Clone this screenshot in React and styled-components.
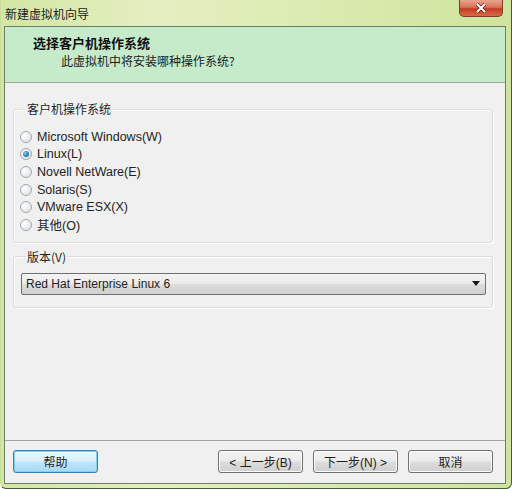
import React from "react";
import styled, { createGlobalStyle } from "styled-components";

const GlobalStyle = createGlobalStyle`
  html, body {
    margin: 0;
    padding: 0;
  }
  body {
    font-family: "Liberation Sans", "Noto Sans CJK SC", sans-serif;
    font-size: 12px;
    color: #1e1e1e;
  }
`;

const osList = [
  { label: "Microsoft Windows(W)" },
  { label: "Linux(L)", checked: true },
  { label: "Novell NetWare(E)" },
  { label: "Solaris(S)" },
  { label: "VMware ESX(X)" },
  { label: "其他(O)" }
];

const Window = styled.div`
  width: 512px;
  height: 489px;
  box-sizing: border-box;
  display: flex;
  flex-direction: column;
  background: linear-gradient(90deg, #d3e6a4 0%, #e4efc1 30%, #dcebb2 60%, #cfe49e 100%);
  border: 1px solid #4a5a42;
  border-top: none;
  border-left-color: #c7df9a;
  border-radius: 0 0 6px 6px;
`;

const TitleBar = styled.div`
  height: 26px;
  display: flex;
  align-items: flex-start;
  justify-content: space-between;
  padding-left: 4px;
  flex-shrink: 0;
`;

const Title = styled.span`
  font-family: "Noto Sans CJK SC", sans-serif;
  font-size: 12px;
  line-height: 27px;
  color: #1c1c1c;
`;

const CloseButton = styled.div`
  width: 44px;
  height: 17px;
  margin-right: 8px;
  box-sizing: border-box;
  border: 1px solid #7b3a2a;
  border-top: none;
  border-radius: 0 0 5px 5px;
  background: linear-gradient(180deg, #e8a58f 0%, #d9735a 45%, #c43d22 55%, #d66a4a 100%);
  display: flex;
  align-items: center;
  justify-content: center;
`;

const Panel = styled.div`
  flex: 1;
  margin: 0 5px 4px 3px;
  border: 1px solid #6e7d68;
  display: flex;
  flex-direction: column;
  background: #f0f0f0;
`;

const Header = styled.div`
  height: 56px;
  box-sizing: border-box;
  background: #c5ebcb;
  border-bottom: 1px solid #a0a8a0;
  padding: 7px 0 0 28px;
  font-family: "Noto Sans CJK SC", sans-serif;
`;

const HeaderTitle = styled.div`
  font-size: 13px;
  font-weight: bold;
  line-height: 18px;
  color: #111;
`;

const HeaderSub = styled.div`
  font-size: 12px;
  line-height: 18px;
  padding-left: 28px;
  color: #1c1c1c;
`;

const Body = styled.div`
  flex: 1;
  padding: 18px 12px 0 8px;
  display: flex;
  flex-direction: column;
  gap: 6px;
`;

const Group = styled.fieldset`
  margin: 0;
  padding: ${({ $pad }) => $pad};
  border: 1px solid #dcdcdc;
  border-radius: 3px;
  box-shadow: inset 1px 1px 0 #ffffff, 1px 1px 0 #ffffff;
`;

const Legend = styled.legend`
  padding: 0 1px;
  margin-left: 5px;
  font-family: "Noto Sans CJK SC", sans-serif;
  font-size: 12px;
  line-height: 16px;
  color: #1e1e1e;
`;

const RadioList = styled.div`
  display: flex;
  flex-direction: column;
`;

const RadioRow = styled.label`
  height: 17.6px;
  display: flex;
  align-items: center;
  gap: 5px;
  font-size: 12.5px;
  color: #222;
`;

const RadioDot = styled.span`
  width: 12px;
  height: 12px;
  margin-left: -1px;
  border-radius: 50%;
  box-sizing: border-box;
  border: 1px solid #a0a8ae;
  background: radial-gradient(circle at 35% 35%, #ffffff 0%, #e4e6e8 70%, #d2d6d9 100%);
  display: flex;
  align-items: center;
  justify-content: center;
  flex-shrink: 0;

  &::after {
    content: "";
    width: 6px;
    height: 6px;
    border-radius: 50%;
    background: ${({ $checked }) =>
      $checked ? "radial-gradient(circle at 35% 35%, #8fd0f5 0%, #2a7ab0 60%, #1c4e78 100%)" : "transparent"};
  }
`;

const Select = styled.div`
  height: 22px;
  box-sizing: border-box;
  border: 1px solid #707070;
  border-radius: 2px;
  background: linear-gradient(180deg, #f3f3f3 0%, #ebebeb 48%, #dddddd 52%, #cfcfcf 100%);
  display: flex;
  align-items: center;
  justify-content: space-between;
  padding: 0 5px 0 4px;
  font-size: 12px;
  color: #222;
`;

const Footer = styled.div`
  height: 43px;
  box-sizing: border-box;
  border-top: 1px solid #a0a0a0;
  display: flex;
  align-items: flex-start;
  padding: 9px 12px 0 8px;
`;

const Button = styled.button`
  width: 85px;
  height: 23px;
  margin: 0;
  padding: 0;
  box-sizing: border-box;
  margin-left: ${({ $gap }) => $gap || 0}px;
  border: 1px solid ${({ $focused }) => ($focused ? "#3c7fb1" : "#707070")};
  border-radius: 3px;
  background: ${({ $focused }) =>
    $focused
      ? "linear-gradient(180deg, #eaf6fd 0%, #d9f0fc 48%, #bee6fd 52%, #a7d9f5 100%)"
      : "linear-gradient(180deg, #f2f2f2 0%, #ebebeb 48%, #dddddd 52%, #cfcfcf 100%)"};
  box-shadow: inset 0 0 0 1px ${({ $focused }) => ($focused ? "#7fd0f4" : "#fcfcfc")};
  font-family: "Liberation Sans", "Noto Sans CJK SC", sans-serif;
  font-size: 12px;
  color: #1e1e1e;
`;

const Spacer = styled.div`
  flex: 1;
`;

const App = () => (
  <>
    <GlobalStyle />
    <Window>
      <TitleBar>
        <Title>新建虚拟机向导</Title>
        <CloseButton>
          <svg width="12" height="10" viewBox="0 0 12 10">
            <path d="M2 1 L10 9 M10 1 L2 9" stroke="#5a1a10" strokeWidth="3.4" />
            <path d="M2 1 L10 9 M10 1 L2 9" stroke="#ffffff" strokeWidth="2" />
          </svg>
        </CloseButton>
      </TitleBar>
      <Panel>
        <Header>
          <HeaderTitle>选择客户机操作系统</HeaderTitle>
          <HeaderSub>此虚拟机中将安装哪种操作系统?</HeaderSub>
        </Header>
        <Body>
          <Group $pad="11px 6px 8px 7px">
            <Legend>客户机操作系统</Legend>
            <RadioList>
              {osList.map(os => (
                <RadioRow key={os.label}>
                  <RadioDot $checked={os.checked} />
                  {os.label}
                </RadioRow>
              ))}
            </RadioList>
          </Group>
          <Group $pad="8px 6px 12px 7px">
            <Legend>版本(V)</Legend>
            <Select>
              <span>Red Hat Enterprise Linux 6</span>
              <svg width="8" height="5" viewBox="0 0 8 5">
                <path d="M0 0 H8 L4 5 Z" fill="#1a1a1a" />
              </svg>
            </Select>
          </Group>
        </Body>
        <Footer>
          <Button $focused>帮助</Button>
          <Spacer />
          <Button>&lt; 上一步(B)</Button>
          <Button $gap={10}>下一步(N) &gt;</Button>
          <Button $gap={10}>取消</Button>
        </Footer>
      </Panel>
    </Window>
  </>
);

export default App;
